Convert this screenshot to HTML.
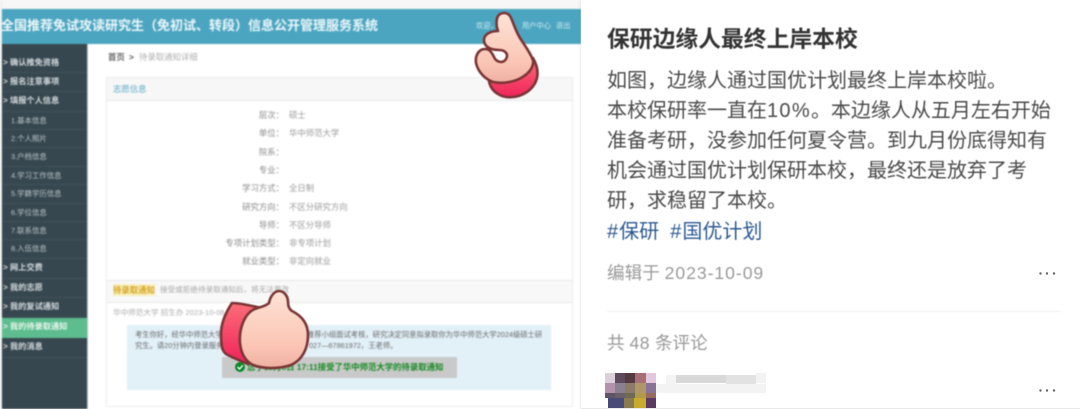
<!DOCTYPE html>
<html lang="zh">
<head>
<meta charset="utf-8">
<style>
html,body{margin:0;padding:0;background:#fff}
#p{position:relative;width:1080px;height:409px;overflow:hidden;background:#fff;font-family:"Liberation Sans","Noto Sans CJK SC",sans-serif}
#p div{position:absolute;white-space:nowrap}
#L{left:0;top:0;width:581px;height:409px;background:#fff;filter:blur(.7px);overflow:hidden}
.m,.s{left:2px;width:85px;height:18px;line-height:18px;border-bottom:1px solid #3f5159;box-sizing:border-box}
.m{font-size:8.2px;font-weight:bold;text-indent:1px;color:#d5dcdf}
.s{font-size:7.4px;text-indent:9px;color:#bcc7cc}
.r{font-size:8.4px;line-height:12px;color:#8a8a8a}
.lb{width:180px;left:104px;text-align:right}
.v{left:289px;color:#999}
.t{color:#4a4a4a;font-size:20px;line-height:30px;left:607px}
</style>
</head>
<body>
<div id="p">
<div id="L">
  <div style="left:0;top:0;width:581px;height:9px;background:#f6f6f6"></div>
  <div style="left:0;top:0;width:2px;height:409px;background:#eceeef"></div>
  <div style="left:2px;top:9px;width:579px;height:35px;background:#4ba5c0"></div>
  <div style="left:1px;top:17px;font-size:13px;line-height:18px;color:#eef8fb;font-weight:bold">全国推荐免试攻读研究生（免初试、转段）信息公开管理服务系统</div>
  <div style="left:476px;top:21px;font-size:7.2px;line-height:10px;color:#d6edf4">欢迎，</div>
  <div style="left:522px;top:21px;font-size:7.2px;line-height:10px;color:#d6edf4">用户中心</div>
  <div style="left:556px;top:21px;font-size:7.2px;line-height:10px;color:#d6edf4">退出</div>

  <div style="left:2px;top:44px;width:85px;height:365px;background:#37474f"></div>
  <div style="left:87px;top:44px;width:1px;height:365px;background:#b9c2c6"></div>
  <div class="m" style="top:53px;height:20px;line-height:19px">&gt; 确认推免资格</div>
  <div class="m" style="top:73px;height:19px">&gt; 报名注意事项</div>
  <div class="m" style="top:92px;height:20px">&gt; 填报个人信息</div>
  <div class="s" style="top:112px">1.基本信息</div>
  <div class="s" style="top:130px">2.个人照片</div>
  <div class="s" style="top:148px;height:19px">3.户档信息</div>
  <div class="s" style="top:167px">4.学习工作信息</div>
  <div class="s" style="top:185px;height:19px">5.学籍学历信息</div>
  <div class="s" style="top:204px">6.学位信息</div>
  <div class="s" style="top:222px">7.联系信息</div>
  <div class="s" style="top:240px;height:19px">8.入伍信息</div>
  <div class="m" style="top:259px;height:20px">&gt; 网上交费</div>
  <div class="m" style="top:279px;height:19px">&gt; 我的志愿</div>
  <div class="m" style="top:298px;height:20px">&gt; 我的复试通知</div>
  <div class="m" style="top:318px;height:20px;background:#5dbd8e;border:0;color:#e6f6ed">&gt; 我的待录取通知</div>
  <div class="m" style="top:338px;height:20px">&gt; 我的消息</div>

  <div style="left:108px;top:51px;font-size:8.4px;line-height:12px;color:#666;font-weight:bold">首页</div>
  <div style="left:129px;top:51px;font-size:8.4px;line-height:12px;color:#555;font-weight:bold">&gt;</div>
  <div style="left:139px;top:51px;font-size:8.4px;line-height:12px;color:#b0b0b0">待录取通知详细</div>

  <div style="left:106px;top:77px;width:467px;height:330px;background:#fff;border:1px solid #ececec;box-sizing:border-box"></div>
  <div style="left:107px;top:78px;width:465px;height:22px;background:#f7f7f7;border-bottom:1px solid #e8e8e8"></div>
  <div style="left:113px;top:83px;font-size:8.4px;line-height:12px;color:#55a9c2">志愿信息</div>

  <div class="r lb" style="top:109px">层次：</div><div class="r v" style="top:109px">硕士</div>
  <div class="r lb" style="top:127px">单位：</div><div class="r v" style="top:127px">华中师范大学</div>
  <div class="r lb" style="top:146px">院系：</div>
  <div class="r lb" style="top:164px">专业：</div>
  <div class="r lb" style="top:182px">学习方式：</div><div class="r v" style="top:182px">全日制</div>
  <div class="r lb" style="top:201px">研究方向：</div><div class="r v" style="top:201px">不区分研究方向</div>
  <div class="r lb" style="top:219px">导师：</div><div class="r v" style="top:219px">不区分导师</div>
  <div class="r lb" style="top:237px">专项计划类型：</div><div class="r v" style="top:237px">非专项计划</div>
  <div class="r lb" style="top:255px">就业类型：</div><div class="r v" style="top:255px">非定向就业</div>

  <div style="left:107px;top:280px;width:465px;height:21px;background:#f8f8f8;border-top:1px solid #e8e8e8;border-bottom:1px solid #e8e8e8"></div>
  <div style="left:113px;top:284px;font-size:8.4px;line-height:12px;color:#d6a52a;background:#f8efbc;font-weight:bold">待录取通知</div>
  <div style="left:160px;top:284px;font-size:7.6px;line-height:12px;color:#a5a5a5">接受或拒绝待录取通知后，将无法更改</div>
  <div style="left:113px;top:307px;font-size:7.6px;line-height:12px;color:#aaa">华中师范大学 招生办 2023-10-08 17:05</div>

  <div style="left:127px;top:325px;width:424px;height:65px;background:#e2f0f8"></div>
  <div style="left:135px;top:329px;font-size:7.3px;line-height:11px;color:#666">考生你好，经华中师范大学</div>
  <div style="left:307px;top:329px;font-size:7.3px;line-height:11px;color:#666">推荐小组面试考核，研究决定同意拟录取你为华中师范大学2024级硕士研</div>
  <div style="left:135px;top:340px;font-size:7.3px;line-height:11px;color:#666">究生。请20分钟内登录服务系统</div>
  <div style="left:309px;top:340px;font-size:7.3px;line-height:11px;color:#666">027—67861972，王老师。</div>
  <div style="left:222px;top:357px;width:235px;height:21px;background:#c9c9c9"></div>
  <div style="left:247px;top:361px;font-size:8.4px;line-height:12px;font-weight:bold;color:#158a22">您于10月8日 17:11接受了华中师范大学的待录取通知</div>
</div>

<svg style="position:absolute;left:0;top:0;filter:blur(.6px)" width="581" height="409" viewBox="0 0 581 409">
  <defs>
    <linearGradient id="sk" x1="0" y1="0" x2="0" y2="1"><stop offset="0" stop-color="#fde3d6"/><stop offset=".72" stop-color="#fbc5b4"/><stop offset="1" stop-color="#eeb0a2"/></linearGradient>
    <linearGradient id="cf" x1="0" y1="0" x2="0" y2="1"><stop offset="0" stop-color="#fb6d78"/><stop offset="1" stop-color="#f0235a"/></linearGradient>
  </defs>
  <circle cx="240" cy="367" r="5" fill="#0c8a2a"/>
  <path d="M237.5 367l2 2 3.2-3.6" fill="none" stroke="#fff" stroke-width="1.3"/>
  <!-- top hand -->
  <path d="M533 58C541 72 538 84 527 92C518 98 505 99 498 94C493 91 490 87 489 81L530 58Z" fill="url(#cf)" stroke="#7a3535" stroke-width="2.6" stroke-linejoin="round"/>
  <path d="M498 31C496 26 496 20 498 16C501 12 507 12 510 16C513 21 515 30 520 38C525 46 530 52 533 60C534 66 530 72 524 76C516 82 503 84 493 82C485 79 478 72 476 63C475 55 479 49 485 49C490 49 492 53 494 57C496 62 503 64 506 59C509 54 505 50 499 50C491 50 484 47 484 40C484 34 491 31 498 31Z" fill="url(#sk)" stroke="#7a3535" stroke-width="2.6" stroke-linejoin="round"/>
  <!-- bottom hand -->
  <path d="M232 303C226 312 221 322 221 334C221 345 222 351 226 354C233 358 241 361 248 364L262 308C252 306 241 303 232 303Z" fill="url(#cf)" stroke="#7a3535" stroke-width="2.6" stroke-linejoin="round"/>
  <path d="M269 303C270 297 274 291 279 291C284 291 288 296 288 302C288 306 289 309 292 311C302 316 308 324 308 335C308 349 302 360 291 365C279 369 263 369 253 365C245 361 241 353 240 343C239 331 243 319 249 313C254 307 264 308 269 303Z" fill="url(#sk)" stroke="#7a3535" stroke-width="2.6" stroke-linejoin="round"/>
</svg>

<div style="left:581px;top:0;width:499px;height:409px;background:#fff;box-shadow:-1px 0 2px rgba(0,0,0,.08)"></div>
<div id="R" style="left:0;top:0;width:1080px;height:409px;filter:blur(.4px)">
  <div style="left:607px;top:23px;font-size:22.8px;line-height:32px;font-weight:bold;color:#333">保研边缘人最终上岸本校</div>
  <div class="t" style="top:66px">如图，边缘人通过国优计划最终上岸本校啦。</div>
  <div class="t" style="top:96px">本校保研率一直在<span style="letter-spacing:1.3px">10%</span>。本边缘人从五月左右开始</div>
  <div class="t" style="top:126px">准备考研，没参加任何夏令营。到九月份底得知有</div>
  <div class="t" style="top:156px">机会通过国优计划保研本校，最终还是放弃了考</div>
  <div class="t" style="top:186px">研，求稳留了本校。</div>
  <div class="t" style="top:217px;color:#2b5a92"><span style="letter-spacing:1px">#</span>保研&nbsp;&nbsp;<span style="letter-spacing:1px">#</span>国优计划</div>
  <div style="left:607px;top:261px;font-size:17.6px;line-height:24px;color:#999">编辑于 <span style="letter-spacing:.95px">2023-10-09</span></div>
  <div style="left:607px;top:331px;font-size:17.6px;line-height:24px;color:#999">共 <span style="letter-spacing:.5px">48</span> 条评论</div>
  <div style="left:607px;top:311px;width:453px;height:1px;background:#f0f0f0"></div>
</div>

<svg style="position:absolute;left:0;top:0" width="1080" height="409" viewBox="0 0 1080 409">
  <g fill="#666">
    <circle cx="1040.5" cy="273.5" r="1.2"/><circle cx="1047" cy="273.5" r="1.2"/><circle cx="1054" cy="273.5" r="1.2"/>
    <circle cx="1040.5" cy="390.5" r="1.2"/><circle cx="1047" cy="390.5" r="1.2"/><circle cx="1054" cy="390.5" r="1.2"/>
  </g>
  <g shape-rendering="crispEdges">
    <rect x="605" y="373" width="10" height="10" fill="#dccfdc"/><rect x="615" y="373" width="10" height="10" fill="#5e4a5c"/><rect x="625" y="373" width="10" height="10" fill="#553a42"/><rect x="635" y="373" width="11" height="10" fill="#a96f76"/><rect x="646" y="373" width="10" height="10" fill="#e2c8dc"/>
    <rect x="605" y="383" width="10" height="10" fill="#b193ad"/><rect x="615" y="383" width="10" height="10" fill="#8a8090"/><rect x="625" y="383" width="10" height="10" fill="#8d7a68"/><rect x="635" y="383" width="11" height="10" fill="#ae9868"/><rect x="646" y="383" width="10" height="10" fill="#8b7398"/>
    <rect x="605" y="393" width="10" height="5" fill="#5f5568"/><rect x="615" y="393" width="10" height="5" fill="#6a6068"/><rect x="625" y="393" width="10" height="5" fill="#6e6a58"/><rect x="635" y="393" width="11" height="5" fill="#b09a48"/><rect x="646" y="393" width="10" height="5" fill="#9a6a60"/>
    <rect x="608" y="398" width="16" height="10" fill="#4a4a78"/><rect x="624" y="398" width="10" height="10" fill="#8a7a50"/><rect x="634" y="398" width="12" height="10" fill="#c8aa30"/><rect x="646" y="398" width="10" height="10" fill="#5a3a60"/>
    <rect x="666" y="375" width="10" height="9" fill="#f4f4f4"/><rect x="676" y="375" width="50" height="8" fill="#d8d8d8"/><rect x="726" y="375" width="30" height="9" fill="#e2e2e2"/><rect x="756" y="373" width="10" height="10" fill="#f2f2f2"/>
    <rect x="656" y="384" width="110" height="9" fill="#f3f3f3"/>
    <rect x="581" y="408" width="499" height="1" fill="#e9e9e9"/>
  </g>
</svg>
</div>
</body>
</html>
